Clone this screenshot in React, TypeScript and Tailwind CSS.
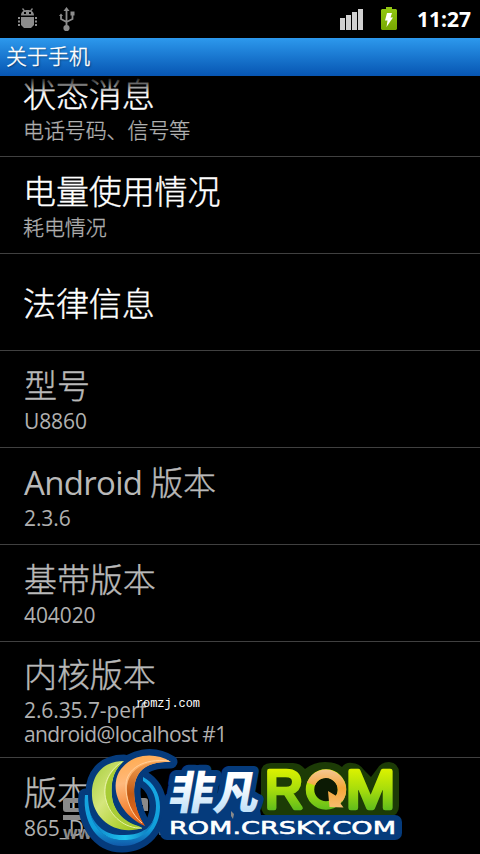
// src/App.tsx
import React from 'react';

type Item = {
  title: React.ReactNode;
  lines?: string[];
  enabled?: boolean;
};

const items: Item[] = [
  { title: '状态消息', lines: ['电话号码、信号等'], enabled: true },
  { title: '电量使用情况', lines: ['耗电情况'], enabled: true },
  { title: '法律信息', enabled: true },
  { title: '型号', lines: ['U8860'] },
  {
    title: (
      <>
        <span className="font-normal tracking-[-0.7px] [-webkit-text-stroke:0]">Android </span>版本
      </>
    ),
    lines: ['2.3.6'],
  },
  { title: '基带版本', lines: ['404020'] },
  { title: '内核版本', lines: ['2.6.35.7-perf', 'android@localhost #1'] },
  { title: '版本号', lines: ['865_DNA'] },
];

const DebugIcon = () => (
  <svg width="20" height="22" viewBox="0 0 20 22" fill="#8c8c8c">
    <path d="M4.500 0.500l2 2.500M14.500 0.500l-2 2.500" stroke="#8c8c8c" strokeWidth="1.3" />
    <path fillRule="evenodd" d="M3 7.500c0-3.800 3-5.500 6.500-5.500s6.500 1.700 6.500 5.500zM6 4v2h2v-2zM11 4v2h2v-2z" />
    <path d="M3 9h13v8l-3 3h-7l-3-3z" />
    <path d="M0 9h2v2h-2zM0 12.500h2v2h-2zM0 16h2v2h-2zM17 9h2v2h-2zM17 12.500h2v2h-2zM17 16h2v2h-2z" />
  </svg>
);

const UsbIcon = () => (
  <svg width="17" height="25" viewBox="0 0 17 25" fill="none" stroke="#8c8c8c" strokeWidth="1.800">
    <path d="M7.500 3v18M2 8v4l5.500 3M13.500 6v6l-6 3" />
    <path d="M7.500 0l3 4h-6zM0 9l2-2.500 2 2.500zM11.500 4.500h4v4h-4z" fill="#8c8c8c" stroke="none" />
    <circle cx="7.500" cy="21" r="3.100" fill="#8c8c8c" stroke="none" />
  </svg>
);

const SignalIcon = () => (
  <svg width="23" height="21" viewBox="0 0 23 21" fill="#d0d0d0">
    <rect x="0" y="9" width="5" height="12" />
    <rect x="6" y="6" width="5" height="15" />
    <rect x="12" y="3" width="5" height="18" />
    <rect x="18" y="0" width="5" height="21" />
  </svg>
);

const BatteryIcon = () => (
  <svg width="16" height="23" viewBox="0 0 16 23">
    <defs>
      <linearGradient id="battery" x1="0" y1="0" x2="0" y2="1">
        <stop offset="0" stopColor="#93c814" />
        <stop offset="1" stopColor="#77a800" />
      </linearGradient>
    </defs>
    <path d="M5 0h6v2h4l1 1v19l-1 1H1l-1-1V3l1-1h4z" fill="url(#battery)" />
    <path d="M6 6h5l-1.500 4.500h2.500L5.500 20l1-6.500H4z" fill="#fff" />
  </svg>
);

const StatusBar = () => (
  <div className="flex h-[38px] shrink-0 items-start bg-black">
    <div className="pl-[18px] pt-[8px]">
      <DebugIcon />
    </div>
    <div className="pl-[21px] pt-[7px]">
      <UsbIcon />
    </div>
    <div className="ml-auto pt-[9px]">
      <SignalIcon />
    </div>
    <div className="pl-[18px] pt-[7px]">
      <BatteryIcon />
    </div>
    <div className="w-[83px] pr-[9px] pt-[6px] text-right text-[21px] font-bold leading-[26px] text-white">11:27</div>
  </div>
);

const Row = ({ title, lines = [], enabled }: Item) => (
  <div
    className={`flex min-h-[97px] shrink-0 flex-col justify-center border-b border-[#404040] ${
      enabled ? 'pl-[23px]' : 'pl-6'
    } ${lines.length > 1 ? 'h-[116px] pt-[2px]' : ''} ${lines.length === 0 ? 'pt-[3px]' : 'pb-[1px]'}`}
  >
    <div
      className={`text-[33px] font-light leading-[41px] tracking-[-0.1px] [-webkit-text-stroke:0.4px] ${
        enabled ? 'text-white' : 'text-[#b9b9b9]'
      }`}
    >
      {title}
    </div>
    {lines.length > 0 && (
      <div
        className={`mt-[3px] text-[21px] leading-[24px] text-[#b0b0b0] ${
          enabled ? 'font-light [-webkit-text-stroke:0.3px]' : ''
        }`}
      >
        {lines.map((line) => (
          <div key={line} className={line.includes('@') ? 'tracking-[-0.6px]' : 'tracking-[-0.1px]'}>
            {line}
          </div>
        ))}
      </div>
    )}
  </div>
);

const RING = 'M143 777C153 782 160 793 160 807C160 828 145 846 122 846C98 846 82 822 85 795L88 795C88 824 103 840 122 840C141 840 156 826 156 806C156 795 151 786 143 781z';
const LEAF = 'M124 761C103 761 91 775 92 796C93 819 117 838 145 827C129 827 114 814 112 797C110 781 115 769 124 761z';
const FLAME = 'M171 762C154 751 130 754 119 772C109 791 122 816 145 826C135 812 129 786 140 772C147 763 158 762 171 762z';

const RomLogo = () => (
  <svg className="absolute left-0 top-[740px]" width="480" height="114" viewBox="0 740 480 114">
    <defs>
      <linearGradient id="leaf" x1="0" y1="0" x2="1" y2="1">
        <stop offset="0" stopColor="#a5cc3b" />
        <stop offset="0.4" stopColor="#d5e67c" />
        <stop offset="0.7" stopColor="#b4d43c" />
        <stop offset="1" stopColor="#94bd18" />
      </linearGradient>
      <linearGradient id="flame" x1="0.3" y1="0" x2="0.5" y2="1">
        <stop offset="0" stopColor="#ffab4f" />
        <stop offset="0.35" stopColor="#ffb97c" />
        <stop offset="0.7" stopColor="#f58a3c" />
        <stop offset="1" stopColor="#d9530f" />
      </linearGradient>
      <linearGradient id="fold" x1="0" y1="0" x2="0" y2="1">
        <stop offset="0" stopColor="#f2a052" />
        <stop offset="0.5" stopColor="#c25a14" />
        <stop offset="1" stopColor="#ef6a1e" />
      </linearGradient>
      <linearGradient id="ring" x1="0" y1="0" x2="0" y2="1">
        <stop offset="0" stopColor="#18a8e4" />
        <stop offset="0.75" stopColor="#109fda" />
        <stop offset="1" stopColor="#1158a8" />
      </linearGradient>
      <linearGradient id="sea" x1="0" y1="0" x2="1" y2="0">
        <stop offset="0" stopColor="#0d7cc4" />
        <stop offset="0.55" stopColor="#1fc4ee" />
        <stop offset="1" stopColor="#0d6cb4" />
      </linearGradient>
      <linearGradient id="ice" gradientUnits="userSpaceOnUse" x1="0" y1="-40" x2="0" y2="4">
        <stop offset="0.3" stopColor="#ffffff" />
        <stop offset="1" stopColor="#bfe0f8" />
      </linearGradient>
      <linearGradient id="lime" gradientUnits="userSpaceOnUse" x1="0" y1="769" x2="0" y2="811">
        <stop offset="0" stopColor="#dcf200" />
        <stop offset="0.5" stopColor="#a5dc0c" />
        <stop offset="1" stopColor="#5dbb1c" />
      </linearGradient>
      <linearGradient id="arrow" gradientUnits="userSpaceOnUse" x1="0" y1="768" x2="0" y2="808">
        <stop offset="0" stopColor="#f3c99a" />
        <stop offset="0.5" stopColor="#f5a638" />
        <stop offset="1" stopColor="#f7bd70" />
      </linearGradient>
    </defs>

    {/* grey site mark below the badge */}
    <g fill="#8a8a8a">
      <path d="M66 798h20v5h-16v5h16v4h-20q-3 0-3-3v-8q0-3 3-3zM63 815h24v5h-24zM132 798h13q3 0 3 3v10h-5v-6h-11zM132 813h8v4h-8z" />
      <text x="63" y="839" fontSize="17" fontWeight="700">www</text>
      <text x="152" y="835" fontSize="17" fontWeight="700">ng</text>
    </g>

    {/* badge */}
    <g fill="#053b7c" stroke="#053b7c" strokeLinejoin="round" strokeWidth="13">
      <path d={RING} />
      <path d={LEAF} />
      <path d={FLAME} />
      <path d="M93 818C100 831 111 838 125 838C138 838 147 833 153 824L140 834z" />
    </g>
    <path fill="url(#ring)" d={RING} />
    <path fill="url(#sea)" d="M90 813C98 831 111 836 125 835C137 835 147 831 154 820C148 836 134 841 122 840C107 840 94 830 90 813z" />
    <path fill="url(#leaf)" stroke="#053b7c" strokeWidth="5" paintOrder="stroke" d={LEAF} />
    <path fill="#a8cc35" d="M124 761C110 770 103 785 106 799C109 816 125 829 145 827C129 826 114 814 112 797C110 781 115 769 124 761z" />
    <path fill="none" stroke="#e9f2a7" strokeWidth="1" d="M122 762C108 771 102 786 106 800C110 816 125 829 142 828" />
    <path fill="url(#flame)" stroke="#053b7c" strokeWidth="6" strokeLinejoin="round" paintOrder="stroke" d={FLAME} />
    <path fill="url(#fold)" d="M168 762C143 760 129 770 127 786C126 803 134 816 145 826C135 812 129 786 140 772C147 764 158 762 168 762z" />
    <path fill="none" stroke="#ffd09b" strokeWidth="1" d="M169 761C143 758 127 769 126 784C125 800 132 815 142 823" />

    {/* wordmark */}
    <path
      fill="#1c3b06"
      d="M271 763H293Q300 763 305 769Q314 762 325 762Q336 762 342 767Q346 762 352 763Q359 763 364 770L371 777L377 769Q381 762 389 762Q399 763 399 773V806Q399 816 389 816H271Q261 816 261 806V773Q261 763 271 763z"
    />
    <rect x="160" y="815" width="242" height="25" rx="7" fill="#053b7c" />
    <path fill="#053b7c" d="M162 800H258L262 820H162z" />
    <text
      transform="translate(167 808.5) skewX(-10)"
      fontSize="45"
      fontWeight="900"
      fill="url(#ice)"
      stroke="#053b7c"
      strokeWidth="12"
      strokeLinejoin="round"
      paintOrder="stroke"
      className="font-['Noto_Sans_CJK_SC',sans-serif]"
    >
      非凡
    </text>
    <g fontSize="54" fill="url(#lime)" stroke="url(#lime)" strokeWidth="4.500" strokeLinejoin="round" className="font-['Liberation_Sans',sans-serif]">
      <text x="265" y="808" textLength="38" lengthAdjust="spacingAndGlyphs">R</text>
      <text x="346" y="808" textLength="49" lengthAdjust="spacingAndGlyphs">M</text>
    </g>
    <circle cx="326" cy="789.500" r="16" fill="#0c1a04" stroke="url(#lime)" strokeWidth="8.500" />
    <path d="M311 784A16 16 0 1 1 339 799" fill="none" stroke="url(#arrow)" strokeWidth="8.500" />
    <path d="M328 791l1.500 16 14 .5-3-4 3.500-6-8.500-2z" fill="url(#arrow)" />
    <path d="M231 811l3 3-1 5-2-3z" fill="#8a8a8a" />
    <text
      x="169"
      y="833.5"
      textLength="227"
      lengthAdjust="spacingAndGlyphs"
      fontSize="18.5"
      fill="#fff"
      stroke="#fff"
      strokeWidth="0.6"
      className="font-['DejaVu_Sans',sans-serif]"
    >
      ROM.CRSKY.COM
    </text>
  </svg>
);

const App = () => {
  return (
    <div className="relative flex h-[854px] w-[480px] flex-col overflow-hidden bg-black font-['Open_Sans','Noto_Sans_CJK_SC',sans-serif]">
      <StatusBar />
      <div className="flex h-[38px] shrink-0 items-center bg-linear-to-b from-[#2d99ed] to-[#0755b2] pb-[1px] pl-[6px] text-[21px] font-light leading-[37px] text-white text-shadow-[1px_1px_2px_#0008] [-webkit-text-stroke:0.4px]">
        关于手机
      </div>
      <div className="relative flex min-h-0 flex-1 flex-col overflow-hidden">
        <div className="-mt-4 flex flex-col">
          {items.map((item, i) => (
            <Row key={i} {...item} />
          ))}
        </div>
        <div className="absolute inset-x-0 top-0 h-[18px] bg-linear-to-b from-black to-transparent" />
      </div>
      <RomLogo />
      <div className="absolute left-[136px] top-[697px] font-['Liberation_Mono',monospace] text-[12px] leading-[14px] tracking-[-0.1px] text-white">romzj.com</div>
    </div>
  );
};

export default App;
